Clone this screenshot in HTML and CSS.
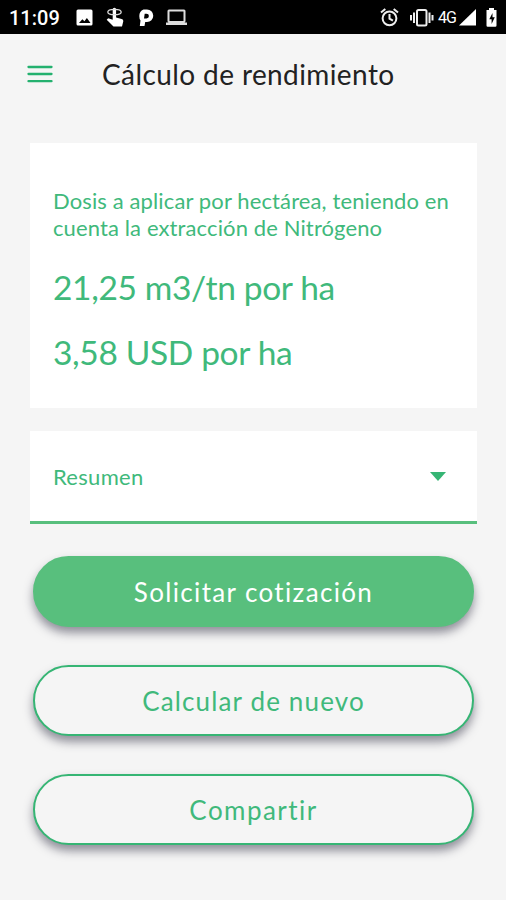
FILE: index.html
```html
<!DOCTYPE html>
<html lang="es">
<head>
<meta charset="utf-8">
<title>Cálculo de rendimiento</title>
<link rel="stylesheet" href="styles.css">
</head>
<body>
<div class="status">
  <span class="clock">11:09</span>
  <svg class="status-left" width="116" height="34" viewBox="0 0 116 34" fill="#fff">
    <path fill-rule="evenodd" d="M3 9.500h13a1.500 1.500 0 0 1 1.500 1.500v13a1.500 1.500 0 0 1-1.500 1.500H3a1.500 1.500 0 0 1-1.500-1.500V11A1.500 1.500 0 0 1 3 9.500ZM4 23h11.500l-3.600-5-2.500 3.300-2-2Z"/>
    <path d="M37.700 9.500a1.700 1.700 0 0 1 3.400 0v8l5.500 1.500q2 .6 1.700 2.200L47 26.500h-8.500l-6.800-6.800 1.500-1.500 4.500 1.500Z"/>
    <g fill="none" stroke="#ddd" stroke-width="1.300"><ellipse cx="39.500" cy="12" rx="6.700" ry="2.700"/></g>
    <path fill-rule="evenodd" d="M68.500 9.500H72a6 6 0 0 1 0 12.500H70.200l-.7 4h-4.700l.7-5.500q-1.200-1.500-1.200-4.500 0-5 4.200-6.500ZM69.700 13.700l-.7 4.800h2.500a2.400 2.400 0 0 0 0-4.800Z"/>
    <path fill-rule="evenodd" fill="#ddd" d="M94 9.500h15q1.500 0 1.500 1.500v10q0 1.500-1.500 1.500h3v2.500H91v-2.500h3q-1.500 0-1.500-1.500V11q0-1.500 1.500-1.500ZM94.500 11.500v9.500h14v-9.500Z"/>
  </svg>
  <svg class="alarm" width="58" height="34" viewBox="0 0 58 34" fill="none" stroke="#eee" stroke-width="2">
    <circle cx="9.500" cy="18.300" r="6.900"/><path d="M9.500 14v4.700l3.400 2M1 12.500l4.300-3.500M18 12.500 13.700 9"/>
    <rect x="37" y="10" width="9.500" height="15.500" rx="1.500"/><path d="M34 12.500v10.500M31 15v5.500M49.500 12.500v10.500M52.500 15v5.500"/>
  </svg>
  <span class="network">4G</span>
  <svg width="42" height="34" viewBox="0 0 42 34" fill="#fff">
    <path d="M19 9V25.500H2Z"/>
    <path fill-rule="evenodd" d="M32 8h5v2h2.500v15.500q0 1.200-1.200 1.200h-7.600q-1.200 0-1.200-1.200V10H32ZM35.500 13l-3.200 6.200h2.300v4.800l3.200-6.700h-2.300Z"/>
  </svg>
</div>
<header class="header">
  <svg class="menu" width="26" height="18" viewBox="0 0 26 18" stroke="#24b16f" stroke-width="2.300" stroke-linecap="round"><path d="M1.500 2h23M1.500 9h23M1.500 16.200h23"/></svg>
  <h1 class="title">Cálculo de rendimiento</h1>
</header>
<main class="content">
  <section class="card">
    <p class="description">Dosis a aplicar por hectárea, teniendo en<br>cuenta la extracción de Nitrógeno</p>
    <p class="amount">21,25 m3/tn por ha</p>
    <p class="amount cost">3,58 USD por ha</p>
  </section>
  <div class="summary">
    <span class="summary-label">Resumen</span>
    <svg width="16" height="9" viewBox="0 0 16 9"><path d="M0 0h16L8 9Z" fill="#36b574"/></svg>
  </div>
  <div class="actions">
    <button class="button primary"><span>Solicitar cotización</span></button>
    <button class="button again"><span>Calcular de nuevo</span></button>
    <button class="button"><span>Compartir</span></button>
  </div>
</main>
</body>
</html>
```
FILE: styles.css
```css
* { box-sizing: border-box; }
body {
  margin: 0;
  height: 900px;
  overflow: hidden;
  background: #f5f5f5;
  color: #40b97b;
  font-family: Lato, sans-serif;
}
h1, p { margin: 0; font-weight: 400; white-space: nowrap; }
svg { display: block; flex: none; }
.status {
  height: 34px;
  padding: 0 7px 0 9px;
  display: flex;
  align-items: center;
  background: #000;
  color: #fff;
  font-family: Roboto, sans-serif;
}
.clock { width: 66px; font-size: 20px; font-weight: 500; line-height: 34px; padding-top: 2px; }
.alarm { margin-left: auto; }
.network { width: 19px; font-size: 16px; line-height: 34px; letter-spacing: -1px; padding-top: 1px; }
.header {
  height: 109px;
  padding: 22px 27px 0;
  display: flex;
  align-items: flex-start;
}
.menu { margin-top: 9px; }
.title { margin-left: 49px; color: #222; font-size: 28px; line-height: 36px; letter-spacing: .4px; }
.content { padding: 0 29px 0 30px; }
.card { height: 265px; padding: 44px 23px 0; background: #fff; }
.description { font-size: 22px; line-height: 27px; letter-spacing: .12px; }
.amount { margin-top: 24px; font-size: 33.500px; line-height: 44px; letter-spacing: -.35px; }
.cost { margin-top: 21px; }
.summary {
  height: 93px;
  margin-top: 23px;
  padding: 0 31px 0 23px;
  display: flex;
  align-items: center;
  justify-content: space-between;
  background: #fff;
  border-bottom: 3px solid #58bf7d;
}
.summary-label { font-size: 22px; line-height: 28px; padding-top: 2px; letter-spacing: .3px; }
.actions { display: grid; gap: 38px; padding: 32px 3px 0; }
.button {
  height: 71px;
  padding: 0;
  border: 2.500px solid #36b574;
  border-radius: 36px;
  background: #f5f5f5;
  color: #40b97b;
  font: 400 26px/32px Lato, sans-serif;
  letter-spacing: 1.450px;
  box-shadow: 0 6px 10px rgba(45, 45, 65, .5);
}
.primary { background: #58bf7d; border-color: #58bf7d; color: #fff; letter-spacing: 1.350px; }
.again { letter-spacing: 1.150px; }
```
